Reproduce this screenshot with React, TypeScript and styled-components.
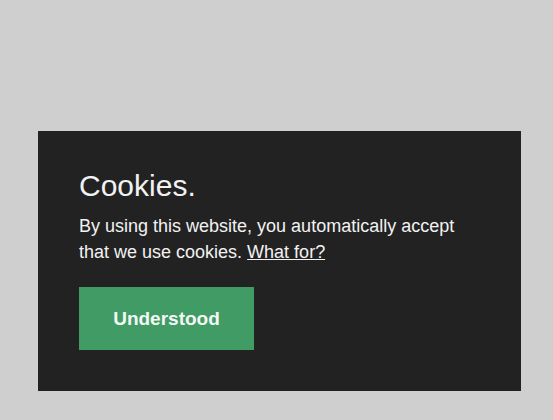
import styled, { createGlobalStyle } from 'styled-components'

const GlobalStyle = createGlobalStyle`
  html, body {
    margin: 0;
    padding: 0;
    background: #cfcfcf;
  }
  body {
    font-family: "Liberation Sans", Arial, sans-serif;
  }
`

const Page = styled.div`
  min-height: 420px;
  padding: 131px 32px 0 38px;
  box-sizing: border-box;
`

const Banner = styled.section`
  width: 483px;
  height: 260px;
  box-sizing: border-box;
  background: #222222;
  padding: 37px 41px 0;
  color: #f2f2f2;
`

const Title = styled.h2`
  margin: 0;
  font-size: 30px;
  font-weight: 400;
  line-height: 36px;
`

const Text = styled.p`
  margin: 9px 0 0;
  font-size: 18px;
  line-height: 26px;
  max-width: 400px;
`

const Link = styled.a`
  color: inherit;
  text-decoration: underline;
  cursor: pointer;
`

const Button = styled.button`
  display: block;
  margin-top: 22px;
  width: 175px;
  height: 63px;
  border: none;
  background: #409b65;
  color: #f4f8f4;
  font: inherit;
  font-size: 19px;
  font-weight: 700;
  cursor: pointer;
`

export default function App() {
  return (
    <>
      <GlobalStyle />
      <Page>
        <Banner>
          <Title>Cookies.</Title>
          <Text>
            By using this website, you automatically accept that we use cookies.{' '}
            <Link>What for?</Link>
          </Text>
          <Button>Understood</Button>
        </Banner>
      </Page>
    </>
  )
}
